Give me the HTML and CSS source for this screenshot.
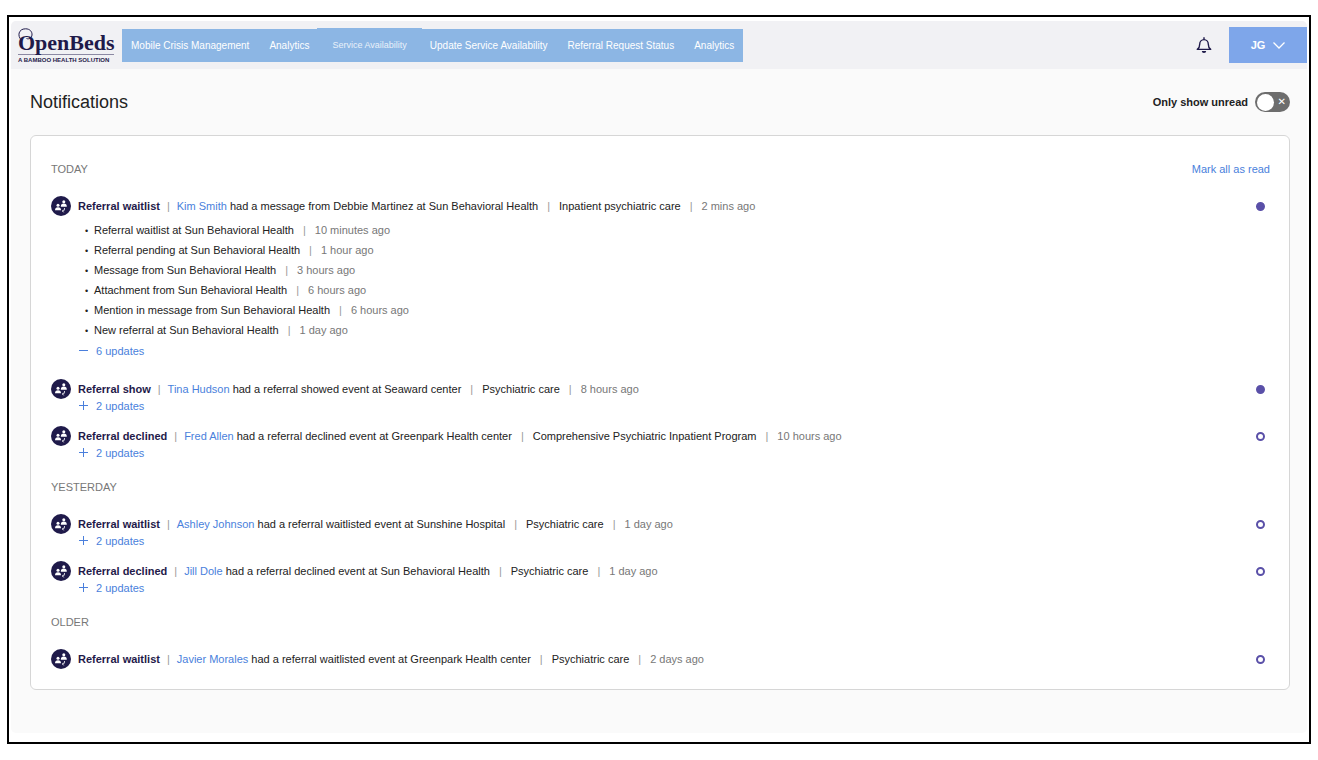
FILE: index.html
```html
<!DOCTYPE html>
<html lang="en">
<head>
  <meta charset="UTF-8">
  <title>Notifications | OpenBeds</title>
  <meta name="viewport" content="width=device-width, initial-scale=1.0">
  <link rel="stylesheet" href="styles.css">
</head>
<body>
  <!-- Shared icons -->
  <svg class="sprite" aria-hidden="true">
    <symbol id="icon-referral" viewBox="0 0 20 20">
      <circle cx="10" cy="10" r="10" fill="#1f1a4a"/>
      <g fill="#fff">
        <circle cx="7" cy="9.300" r="1.500"/>
        <path d="M4 14.300c0-2.300 1-3.100 3-3.100s3 .8 3 3.100z"/>
        <circle cx="12.800" cy="5.700" r="1.500"/>
        <path d="M9.800 10.700c0-2.300 1-3.100 3-3.100s3 .8 3 3.100z"/>
      </g>
      <path d="M13.500 12v1.200c0 1.200-.6 1.800-1.900 1.800M12.700 13.600L11.300 15l1.400 1.400" fill="none" stroke="#fff" stroke-width="0.800"/>
    </symbol>
    <symbol id="icon-plus" viewBox="0 0 10 10">
      <path d="M4.500 0v9M0 4.500h9" fill="none" stroke="#4a7fdc" stroke-width="1"/>
    </symbol>
    <symbol id="icon-minus" viewBox="0 0 10 10">
      <path d="M0 4.500h9" fill="none" stroke="#4a7fdc" stroke-width="1"/>
    </symbol>
  </svg>

  <div class="frame">
    <div class="app">
      <header class="topbar">
        <a class="logo" href="#">
          <svg class="logo-ring" viewBox="0 0 16 16" aria-hidden="true">
            <path d="M3.500 12C-1 8 .5 .8 7.500 .8c4.500 0 6.800 3 6.500 6.200-.3 3-3 4.500-5.500 3.500" fill="none" stroke="#1f1a4a" stroke-width="1"/>
          </svg>
          <span class="logo-name">OpenBeds</span>
          <span class="logo-tag">A BAMBOO HEALTH SOLUTION</span>
        </a>
        <nav class="nav">
          <a href="#">Mobile Crisis Management</a>
          <a href="#">Analytics</a>
          <a class="current" href="#">Service Availability</a>
          <a href="#">Update Service Availability</a>
          <a href="#">Referral Request Status</a>
          <a href="#">Analytics</a>
        </nav>
        <div class="account">
          <button class="bell" type="button" aria-label="Notifications">
            <svg viewBox="0 0 16 16" aria-hidden="true">
              <path d="M1.300 12.400c2-1.400 2.400-2.400 2.400-5.200a4.300 4.600 0 0 1 8.600 0c0 2.800.4 3.800 2.400 5.200zM8 2.600v-2.300" fill="none" stroke="#1f1a4a" stroke-width="1.400" stroke-linejoin="round"/>
              <path d="M5.800 14h4.400a2.200 2 0 0 1-4.400 0z" fill="#1f1a4a"/>
            </svg>
          </button>
          <button class="user" type="button">JG
            <svg viewBox="0 0 12 7" aria-hidden="true"><path d="M0.500 0.500L6 6l5.500-5.500" fill="none" stroke="#fff" stroke-width="1.300"/></svg>
          </button>
        </div>
      </header>

      <main class="content">
        <div class="page-head">
          <h1>Notifications</h1>
          <label class="unread">Only show unread <input type="checkbox" class="switch"></label>
        </div>

        <div class="card">
          <section class="group">
            <div class="group-head">
              <h2>TODAY</h2>
              <a href="#">Mark all as read</a>
            </div>
            <article class="note expanded">
              <div class="note-row">
                <svg class="note-icon" aria-hidden="true"><use href="#icon-referral"/></svg>
                <p><b>Referral waitlist</b><i>|</i><a href="#">Kim Smith</a> had a message from Debbie Martinez at Sun Behavioral Health<i>|</i>Inpatient psychiatric care<i>|</i><time>2 mins ago</time></p>
                <span class="dot unread-dot"></span>
              </div>
              <ul class="updates">
                <li>Referral waitlist at Sun Behavioral Health<i>|</i><time>10 minutes ago</time></li>
                <li>Referral pending at Sun Behavioral Health<i>|</i><time>1 hour ago</time></li>
                <li>Message from Sun Behavioral Health<i>|</i><time>3 hours ago</time></li>
                <li>Attachment from Sun Behavioral Health<i>|</i><time>6 hours ago</time></li>
                <li>Mention in message from Sun Behavioral Health<i>|</i><time>6 hours ago</time></li>
                <li>New referral at Sun Behavioral Health<i>|</i><time>1 day ago</time></li>
              </ul>
              <button class="more" type="button"><svg aria-hidden="true"><use href="#icon-minus"/></svg>6 updates</button>
            </article>
            <article class="note">
              <div class="note-row">
                <svg class="note-icon" aria-hidden="true"><use href="#icon-referral"/></svg>
                <p><b>Referral show</b><i>|</i><a href="#">Tina Hudson</a> had a referral showed event at Seaward center<i>|</i>Psychiatric care<i>|</i><time>8 hours ago</time></p>
                <span class="dot unread-dot"></span>
              </div>
              <button class="more" type="button"><svg aria-hidden="true"><use href="#icon-plus"/></svg>2 updates</button>
            </article>
            <article class="note">
              <div class="note-row">
                <svg class="note-icon" aria-hidden="true"><use href="#icon-referral"/></svg>
                <p><b>Referral declined</b><i>|</i><a href="#">Fred Allen</a> had a referral declined event at Greenpark Health center<i>|</i>Comprehensive Psychiatric Inpatient Program<i>|</i><time>10 hours ago</time></p>
                <span class="dot"></span>
              </div>
              <button class="more" type="button"><svg aria-hidden="true"><use href="#icon-plus"/></svg>2 updates</button>
            </article>
          </section>

          <section class="group">
            <div class="group-head">
              <h2>YESTERDAY</h2>
            </div>
            <article class="note">
              <div class="note-row">
                <svg class="note-icon" aria-hidden="true"><use href="#icon-referral"/></svg>
                <p><b>Referral waitlist</b><i>|</i><a href="#">Ashley Johnson</a> had a referral waitlisted event at Sunshine Hospital<i>|</i>Psychiatric care<i>|</i><time>1 day ago</time></p>
                <span class="dot"></span>
              </div>
              <button class="more" type="button"><svg aria-hidden="true"><use href="#icon-plus"/></svg>2 updates</button>
            </article>
            <article class="note">
              <div class="note-row">
                <svg class="note-icon" aria-hidden="true"><use href="#icon-referral"/></svg>
                <p><b>Referral declined</b><i>|</i><a href="#">Jill Dole</a> had a referral declined event at Sun Behavioral Health<i>|</i>Psychiatric care<i>|</i><time>1 day ago</time></p>
                <span class="dot"></span>
              </div>
              <button class="more" type="button"><svg aria-hidden="true"><use href="#icon-plus"/></svg>2 updates</button>
            </article>
          </section>

          <section class="group">
            <div class="group-head">
              <h2>OLDER</h2>
            </div>
            <article class="note">
              <div class="note-row">
                <svg class="note-icon" aria-hidden="true"><use href="#icon-referral"/></svg>
                <p><b>Referral waitlist</b><i>|</i><a href="#">Javier Morales</a> had a referral waitlisted event at Greenpark Health center<i>|</i>Psychiatric care<i>|</i><time>2 days ago</time></p>
                <span class="dot"></span>
              </div>
            </article>
          </section>
        </div>
      </main>
    </div>
  </div>
</body>
</html>
```

FILE: styles.css
```css
* {
  box-sizing: border-box;
}
body {
  margin: 15px 7px 16px;
  background: #fff;
  color: #222;
  font: 11px/20px "Liberation Sans", Arial, sans-serif;
}
h1, h2, p, ul {
  margin: 0;
  padding: 0;
}
a {
  color: #4a7fdc;
  text-decoration: none;
}
button {
  padding: 0;
  border: none;
  background: none;
  font: inherit;
  cursor: pointer;
}
svg {
  display: block;
}
.sprite {
  position: absolute;
  width: 0;
  height: 0;
}
.frame {
  padding: 4px 2px 9px;
  border: 2px solid #000;
}
.app {
  overflow: hidden;
  border-radius: 5px;
  background: #fafafa;
}

/* Top bar */
.topbar {
  display: flex;
  align-items: center;
  height: 48px;
  padding-left: 7px;
  background: #f1f1f4;
}
.logo {
  position: relative;
  display: flex;
  flex-direction: column;
  width: 96px;
  margin-right: 8px;
  padding-top: 6px;
  color: #1f1a4a;
  white-space: nowrap;
}
.logo-ring {
  position: absolute;
  top: 2px;
  left: 0;
  width: 16px;
  height: 16px;
}
.logo-name {
  border-bottom: 1px solid #8c89a3;
  font: bold 22px/22px "Liberation Serif", "Times New Roman", serif;
}
.logo-tag {
  font-size: 6px;
  font-weight: bold;
  line-height: 10px;
}
.nav {
  display: flex;
  gap: 20px;
  padding: 0 9px;
  background: #8cb6e4;
  font: 10px/33px "Liberation Sans", Arial, sans-serif;
  white-space: nowrap;
}
.nav a {
  color: #fff;
}
.nav .current {
  margin: -1px -12px 0;
  padding: 0 15px;
  border-top: 1px solid #8cb6e4;
  color: #e9f1fa;
  font-size: 9px;
}
.account {
  display: flex;
  align-items: center;
  gap: 17px;
  margin-left: auto;
}
.bell svg {
  width: 16px;
  height: 16px;
}
.user {
  display: flex;
  align-items: center;
  justify-content: center;
  gap: 8px;
  width: 78px;
  height: 36px;
  background: #7ea6ea;
  color: #fff;
  font-weight: bold;
}
.user svg {
  width: 12px;
  height: 7px;
}

/* Page */
.content {
  padding: 23px 17px 43px 19px;
}
.page-head {
  display: flex;
  align-items: center;
  justify-content: space-between;
  height: 20px;
}
h1 {
  font-size: 18px;
  font-weight: normal;
}
.unread {
  display: flex;
  align-items: center;
  gap: 7px;
  font-weight: bold;
}
.switch {
  display: flex;
  align-items: center;
  justify-content: space-between;
  width: 35px;
  height: 20px;
  margin: 0;
  padding: 0 4px 0 2px;
  border-radius: 10px;
  background: #6d6d6d;
  appearance: none;
}
.switch::before {
  content: "";
  width: 17px;
  height: 17px;
  border-radius: 50%;
  background: #fff;
}
.switch::after {
  content: "✕";
  color: #fff;
  font: 10px/20px "DejaVu Sans", sans-serif;
}
.card {
  margin-top: 23px;
  padding: 23px 19px 20px 20px;
  border: 1px solid #d6d6d6;
  border-radius: 6px;
  background: #fff;
}
.group + .group {
  margin-top: 17px;
}
.group-head {
  display: flex;
  justify-content: space-between;
  margin-bottom: 17px;
}
h2 {
  color: #777;
  font-size: 11px;
  font-weight: normal;
}

/* Notifications */
.note + .note {
  margin-top: 13px;
}
.note.expanded + .note {
  margin-top: 21px;
}
.note-row {
  display: flex;
  align-items: center;
  gap: 7px;
}
.note-icon {
  width: 20px;
  height: 20px;
}
.note b {
  color: #1f1a4a;
}
.note i {
  margin: 0 9px;
  color: #999;
  font-style: normal;
}
.note b + i {
  margin: 0 7px;
}
.note time {
  color: #777;
}
.dot {
  width: 9px;
  height: 9px;
  margin: 0 5px 0 auto;
  border: 2px solid #5a50a8;
  border-radius: 50%;
}
.unread-dot {
  background: #5a50a8;
}
.updates {
  margin: 4px 0 4px 43px;
  list-style: none;
}
.updates li::before {
  content: "•";
  display: inline-block;
  width: 9px;
  margin-left: -9px;
  font-size: 9px;
  line-height: 1;
}
.more {
  display: flex;
  align-items: center;
  gap: 7px;
  height: 14px;
  margin-left: 28px;
  color: #4a7fdc;
}
.more svg {
  width: 10px;
  height: 10px;
}
```
